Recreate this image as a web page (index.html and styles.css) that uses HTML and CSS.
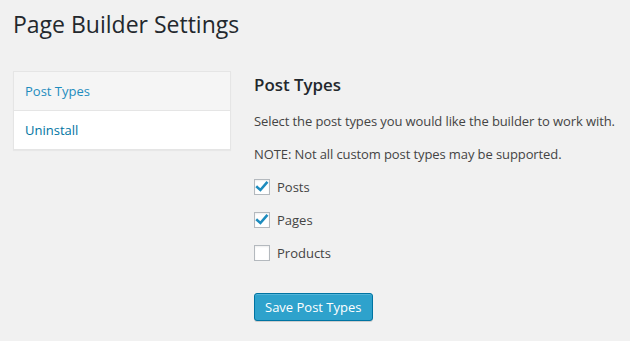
FILE: index.html
```html
<!DOCTYPE html>
<html>
<head>
<meta charset="utf-8">
<link rel="stylesheet" href="styles.css">
</head>
<body>
<div class="wrap">
  <h1 class="title">Page Builder Settings</h1>
  <div class="layout">
    <ul class="tabs">
      <li class="tab active"><a href="#">Post Types</a></li>
      <li class="tab"><a href="#">Uninstall</a></li>
    </ul>
    <div class="panel">
      <h2 class="heading">Post Types</h2>
      <p class="text">Select the post types you would like the builder to work with.</p>
      <p class="text">NOTE: Not all custom post types may be supported.</p>
      <label class="check"><span class="box checked"><svg viewBox="0 0 16 16" width="16" height="16"><path d="M3.2 8.2 L6.4 11 L12.6 3.8" fill="none" stroke="#1e8cbe" stroke-width="2.6" stroke-linecap="square"/></svg></span>Posts</label>
      <label class="check"><span class="box checked"><svg viewBox="0 0 16 16" width="16" height="16"><path d="M3.2 8.2 L6.4 11 L12.6 3.8" fill="none" stroke="#1e8cbe" stroke-width="2.6" stroke-linecap="square"/></svg></span>Pages</label>
      <label class="check"><span class="box"></span>Products</label>
      <div class="actions"><button class="button">Save Post Types</button></div>
    </div>
  </div>
</div>
</body>
</html>
```
FILE: styles.css
```css
html, body { margin: 0; padding: 0; }
body {
  background: #f1f1f1;
  font-family: "Open Sans", sans-serif;
  font-size: 13px;
  color: #444;
  width: 630px;
  height: 341px;
  overflow: hidden;
}
.wrap { padding: 0 13px; }
.title {
  margin: 0;
  padding: 10px 0 0 0;
  font-size: 23px;
  font-weight: 400;
  line-height: 29px;
  color: #23282d;
}
.layout {
  display: flex;
  align-items: flex-start;
  margin-top: 32px;
}
.tabs {
  list-style: none;
  margin: 0;
  padding: 0;
  width: 216px;
  background: #fff;
  border: 1px solid #e5e5e5;
  box-shadow: 0 1px 1px rgba(0,0,0,.04);
  flex: none;
}
.tab {
  height: 38px;
  display: flex;
  align-items: center;
  padding-left: 11px;
}
.tab + .tab { border-top: 1px solid #e5e5e5; }
.tab.active { background: #f5f5f5; }
.tab a { color: #0074a2; text-decoration: none; font-size: 13px; }
.tab.active a { color: #1e8cbe; }
.panel {
  margin-left: 23px;
  flex: 1;
  min-width: 0;
}
.heading {
  margin: 0;
  padding-top: 3px;
  font-size: 16.9px;
  font-weight: 600;
  line-height: 22px;
  color: #23282d;
}
.text {
  margin: 13px 0 0 0;
  line-height: 20px;
  white-space: nowrap;
  letter-spacing: -0.1px;
}
.heading + .text { margin-top: 15px; }
.check {
  display: flex;
  align-items: center;
  height: 20px;
  margin-top: 13px;
  line-height: 20px;
}
.text + .check { margin-top: 13px; }
.box {
  width: 16px;
  height: 16px;
  box-sizing: border-box;
  border: 1px solid #b4b9be;
  background: #fff;
  box-shadow: inset 0 1px 2px rgba(0,0,0,.07);
  margin-right: 7px;
  display: flex;
  align-items: center;
  justify-content: center;
  position: relative;
}
.box svg { position: absolute; left: -1px; top: -1px; }
.actions { margin-top: 30px; }
.button {
  font-family: "Open Sans", sans-serif;
  font-size: 13px;
  color: #fff;
  background: #2ea2cc;
  border: 1px solid #0074a2;
  border-radius: 3px;
  box-shadow: inset 0 1px 0 rgba(120,200,230,.5), 0 1px 0 rgba(0,0,0,.15);
  height: 28px;
  line-height: 26px;
  padding: 0 10px 1px;
  cursor: pointer;
}
```
